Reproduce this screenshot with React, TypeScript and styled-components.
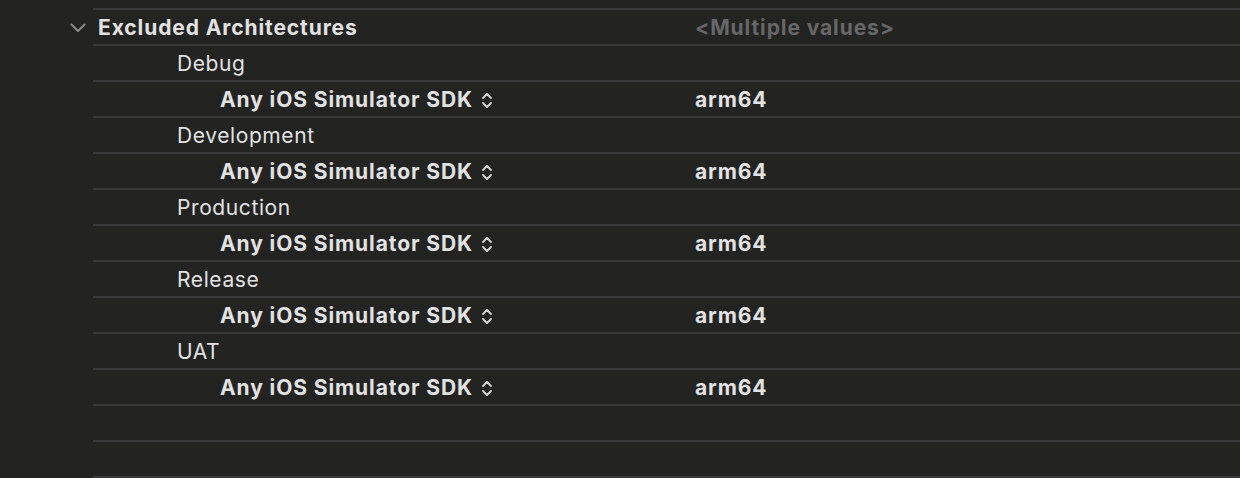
import React from 'react'
import styled, {createGlobalStyle} from 'styled-components'

const GlobalStyle = createGlobalStyle`
    html, body {
        margin: 0;
        padding: 0;
        background: #232322;
    }
    body {
        font-family: Inter, "Noto Sans", sans-serif;
        -webkit-font-smoothing: antialiased;
    }
`

const Page = styled.div`
    padding-top: 8px;
    height: 478px;
    box-sizing: border-box;
    overflow: hidden;
`

const Row = styled.div`
    display: grid;
    grid-template-columns: 93px 1fr;
    height: 36px;
`

const Gutter = styled.div`
    display: flex;
    align-items: center;
    justify-content: flex-end;
    padding-right: 7px;
    padding-top: 3px;
`

const Line = styled.div`
    display: grid;
    grid-template-columns: 602px 1fr;
    align-items: center;
    border-top: 2px solid #3a3a3a;
    padding-top: 1px;
`

const Name = styled.div<{level: number; bold?: boolean}>`
    display: flex;
    align-items: center;
    padding-left: ${(p) => [5, 84, 127][p.level]}px;
    font-size: 21px;
    font-weight: ${(p) => (p.bold ? 700 : 400)};
    letter-spacing: ${(p) => (p.bold ? 0.9 : 0.6)}px;
    color: #e2e2e2;
    white-space: nowrap;
`

const Value = styled.div<{muted?: boolean}>`
    font-size: 21px;
    font-weight: 700;
    letter-spacing: 0.9px;
    color: ${(p) => (p.muted ? '#676767' : '#e2e2e2')};
    white-space: nowrap;
`

const Stepper = styled.svg`
    margin-left: 8px;
    margin-top: 1px;
`

const Disclosure = () => (
    <svg width="16" height="10" viewBox="0 0 16 10">
        <path d="M1.5 1.5 L8 8 L14.5 1.5" fill="none" stroke="#8b8b8b" strokeWidth="2" strokeLinecap="round" strokeLinejoin="round" />
    </svg>
)

const UpDown = () => (
    <Stepper width="12" height="17" viewBox="0 0 12 17">
        <path d="M2 6 L6 2 L10 6" fill="none" stroke="#d6d6d6" strokeWidth="1.8" strokeLinecap="round" strokeLinejoin="round" />
        <path d="M2 11 L6 15 L10 11" fill="none" stroke="#d6d6d6" strokeWidth="1.8" strokeLinecap="round" strokeLinejoin="round" />
    </Stepper>
)

const configs = ['Debug', 'Development', 'Production', 'Release', 'UAT']

export default function App() {
    return (
        <Page>
            <GlobalStyle />
            <Row>
                <Gutter>
                    <Disclosure />
                </Gutter>
                <Line>
                    <Name level={0} bold>Excluded Architectures</Name>
                    <Value muted>&lt;Multiple values&gt;</Value>
                </Line>
            </Row>
            {configs.map((c) => (
                <React.Fragment key={c}>
                    <Row>
                        <Gutter />
                        <Line>
                            <Name level={1}>{c}</Name>
                        </Line>
                    </Row>
                    <Row>
                        <Gutter />
                        <Line>
                            <Name level={2} bold>
                                Any iOS Simulator SDK
                                <UpDown />
                            </Name>
                            <Value>arm64</Value>
                        </Line>
                    </Row>
                </React.Fragment>
            ))}
            <Row>
                <Gutter />
                <Line />
            </Row>
            <Row>
                <Gutter />
                <Line />
            </Row>
            <Row>
                <Gutter />
                <Line />
            </Row>
        </Page>
    )
}
